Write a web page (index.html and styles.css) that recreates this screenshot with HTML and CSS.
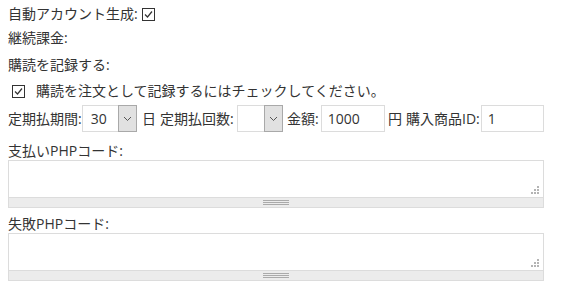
FILE: index.html
```html
<!DOCTYPE html>
<html lang="ja">
<head>
    <meta charset="UTF-8">
    <title>定期購読設定</title>
    <link rel="stylesheet" href="styles.css">
</head>
<body>
    <div class="form">
        <div class="row row-auto">
            <span>自動アカウント生成:</span>
            <span class="check"><svg width="13" height="13" viewBox="0 0 13 13"><rect x="0.5" y="0.5" width="12" height="12" fill="#fff" stroke="#333"/><path d="M3 6.5 L5.5 9 L10 3.5" fill="none" stroke="#333" stroke-width="1.2"/></svg></span>
        </div>
        <div class="row row-renew">継続課金:</div>
        <div class="row row-record">購読を記録する:</div>
        <div class="row row-note">
            <span class="check"><svg width="13" height="13" viewBox="0 0 13 13"><rect x="0.5" y="0.5" width="12" height="12" fill="#fff" stroke="#333"/><path d="M3 6.5 L5.5 9 L10 3.5" fill="none" stroke="#333" stroke-width="1.2"/></svg></span>
            <span class="note-text">購読を注文として記録するにはチェックしてください。</span>
        </div>
        <div class="row row-fields">
            <span>定期払期間:</span>
            <span class="select select-period">
                <span class="select-value">30</span>
                <span class="select-arrow"><svg width="9" height="6" viewBox="0 0 9 6"><path d="M1 1 L4.5 4.5 L8 1" fill="none" stroke="#555" stroke-width="1"/></svg></span>
            </span>
            <span class="unit">日</span>
            <span class="gap-s">定期払回数:</span>
            <span class="select select-count">
                <span class="select-value"></span>
                <span class="select-arrow"><svg width="9" height="6" viewBox="0 0 9 6"><path d="M1 1 L4.5 4.5 L8 1" fill="none" stroke="#555" stroke-width="1"/></svg></span>
            </span>
            <span class="gap-l">金額:</span>
            <span class="field field-amount">1000</span>
            <span class="yen">円</span>
            <span class="gap-m">購入商品ID:</span>
            <span class="field field-id">1</span>
        </div>
        <div class="label label-pay">支払いPHPコード:</div>
        <div class="editor">
            <div class="editor-area">
                <svg class="resize" width="8" height="8" viewBox="0 0 8 8"><rect x="6" y="0" width="2" height="2"/><rect x="3" y="3" width="2" height="2"/><rect x="6" y="3" width="2" height="2"/><rect x="0" y="6" width="2" height="2"/><rect x="3" y="6" width="2" height="2"/><rect x="6" y="6" width="2" height="2"/></svg>
            </div>
            <div class="editor-bar"><span class="grip"></span></div>
        </div>
        <div class="label label-fail">失敗PHPコード:</div>
        <div class="editor">
            <div class="editor-area">
                <svg class="resize" width="8" height="8" viewBox="0 0 8 8"><rect x="6" y="0" width="2" height="2"/><rect x="3" y="3" width="2" height="2"/><rect x="6" y="3" width="2" height="2"/><rect x="0" y="6" width="2" height="2"/><rect x="3" y="6" width="2" height="2"/><rect x="6" y="6" width="2" height="2"/></svg>
            </div>
            <div class="editor-bar"><span class="grip"></span></div>
        </div>
    </div>
</body>
</html>
```

FILE: styles.css
```css
body {
    margin: 0;
    padding: 4px 8px 0;
    background-color: #fff;
    color: #333;
    font-family: "Open Sans", "Noto Sans CJK JP", sans-serif;
    font-size: 14px;
}

.form {
    width: 536px;
}

.row {
    display: flex;
    align-items: center;
    height: 20px;
    line-height: 20px;
    white-space: nowrap;
}

.row-renew {
    margin-top: 4px;
}

.row-record {
    margin-top: 7px;
}

.row-note {
    margin-top: 6px;
}

.row-auto .check {
    margin-left: 4px;
}

.row-note .check {
    margin-left: 4px;
}

.check {
    display: inline-flex;
}

.note-text {
    margin-left: 11px;
}

.row-fields {
    margin-top: 4px;
    height: 27px;
}

.select {
    display: inline-flex;
    height: 27px;
    box-sizing: border-box;
    border: 1px solid #dcdcdc;
    background-color: #fff;
}

.select-period {
    width: 56px;
}

.select-count {
    width: 47px;
    margin-left: 3px;
}

.select-value {
    flex: 1;
    padding-left: 8px;
    line-height: 25px;
}

.select-arrow {
    display: flex;
    align-items: center;
    justify-content: center;
    width: 17px;
    margin: -1px -1px -1px 0;
    border: 1px solid #a9a9a9;
    background-color: #e1e1e1;
}

.unit {
    margin-left: 5px;
}

.gap-s {
    margin-left: 4px;
}

.gap-l {
    margin-left: 4px;
}

.gap-m {
    margin-left: 4px;
}

.yen {
    margin-left: 3px;
}

.field {
    display: inline-block;
    height: 27px;
    box-sizing: border-box;
    border: 1px solid #dcdcdc;
    padding-left: 6px;
    line-height: 25px;
}

.field-amount {
    width: 65px;
    margin-left: 2px;
}

.field-id {
    width: 64px;
    margin-left: 1px;
}

.label {
    height: 18px;
    line-height: 18px;
}

.label-pay {
    margin-top: 10px;
}

.label-fail {
    margin-top: 7px;
}

.editor {
    border: 1px solid #dcdcdc;
}

.editor-area {
    position: relative;
    height: 36px;
    background-color: #fff;
}

.resize {
    position: absolute;
    right: 4px;
    bottom: 3px;
    fill: #b4b4b4;
}

.editor-bar {
    display: flex;
    justify-content: center;
    align-items: center;
    height: 9px;
    border-top: 1px solid #dcdcdc;
    background-color: #ececec;
}

.grip {
    width: 26px;
    height: 5px;
    border-top: 1px solid #aaa;
    border-bottom: 1px solid #aaa;
    box-sizing: border-box;
    background: linear-gradient(#aaa, #aaa) center / 100% 1px no-repeat;
}
```
